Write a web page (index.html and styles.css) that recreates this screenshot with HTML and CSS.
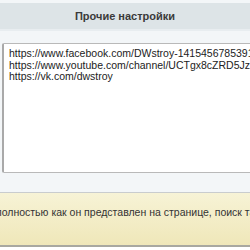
FILE: index.html
```html
<!DOCTYPE html>
<html lang="ru">
<head>
    <meta charset="UTF-8">
    <title>Прочие настройки</title>
    <link rel="stylesheet" href="styles.css">
</head>
<body>
    <div class="section">
        <h2 class="section-title">Прочие настройки</h2>
        <div class="section-body">
            <textarea class="links" spellcheck="false">https://www.facebook.com/DWstroy-1415456785391234/
https://www.youtube.com/channel/UCTgx8cZRD5Jz2abcdef
https://vk.com/dwstroy</textarea>
        </div>
    </div>

    <div class="notice">
        <p>полностью как он представлен на странице, поиск также выполняется</p>
    </div>
</body>
</html>
```

FILE: styles.css
```css
body {
    margin: 0;
    padding: 0;
    background-color: #ffffff;
    font-family: Arial, "Liberation Sans", sans-serif;
    overflow: hidden;
}
.section {
    padding-top: 3px;
    background-color: #f3f6f8;
    border-bottom: 1px solid #c9ccce;
}
.section-title {
    margin: 0;
    height: 26px;
    line-height: 26px;
    background-color: #dde4e7;
    border-bottom: 2px solid #e8edf0;
    text-align: center;
    font-size: 11px;
    font-weight: bold;
    color: #3a3a3a;
}
.section-body {
    padding: 12px 0 19px 2px;
}
.links {
    display: block;
    width: 300px;
    height: 130px;
    margin: 0;
    padding: 4px 5px;
    box-sizing: border-box;
    border: 1px solid #b9b9b9;
    border-left: 2px solid #a9a9a9;
    border-radius: 2px;
    background-color: #ffffff;
    font-family: Arial, "Liberation Sans", sans-serif;
    font-size: 10.5px;
    line-height: 11.5px;
    color: #222;
    resize: none;
    overflow: hidden;
    white-space: pre;
}
.notice {
    height: 52px;
    background: linear-gradient(#f7f3d6, #efe7b9);
    border-bottom: 2px solid #a8a8a0;
    overflow: hidden;
}
.notice p {
    margin: 0 0 0 -4px;
    padding-top: 13px;
    white-space: nowrap;
    font-size: 10.5px;
    color: #333;
}
```
